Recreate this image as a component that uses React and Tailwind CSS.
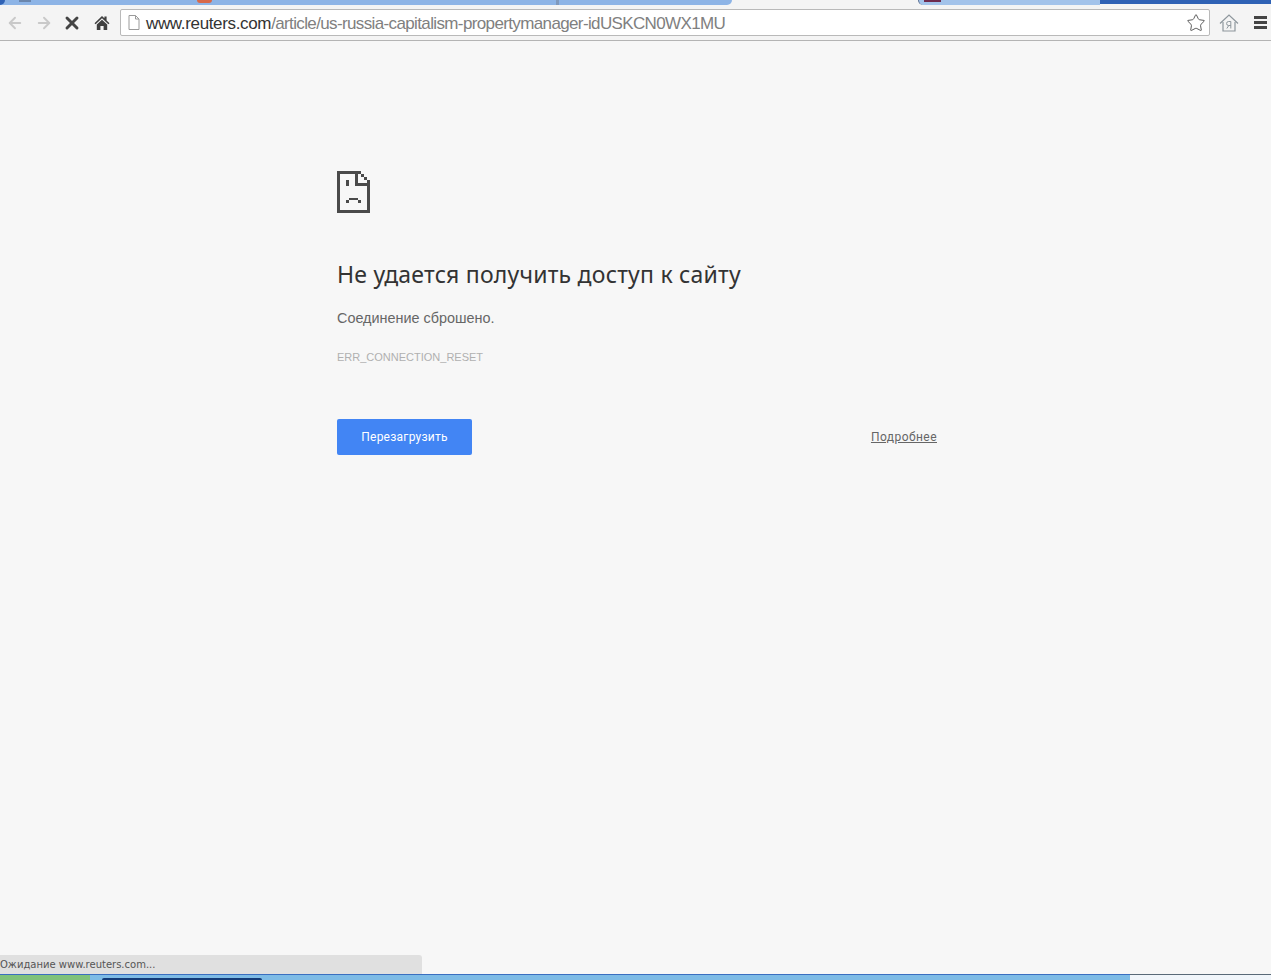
import { ArrowLeft, ArrowRight, X, Star } from "lucide-react";

function SadPage() {
  return (
    <svg width="33" height="42" viewBox="0 0 33 42" className="block" fill="#4a4a4a" shapeRendering="crispEdges">
      {/* outline */}
      <rect x="0" y="0" width="3" height="42" />
      <rect x="0" y="39" width="33" height="3" />
      <rect x="30" y="9" width="3" height="33" />
      <rect x="0" y="0" width="21" height="3" />
      {/* folded corner */}
      <rect x="21" y="0" width="3" height="3" />
      <rect x="24" y="3" width="3" height="3" />
      <rect x="27" y="6" width="3" height="3" />
      <rect x="18" y="0" width="3" height="15" />
      <rect x="18" y="12" width="15" height="3" />
      {/* face */}
      <rect x="9" y="9" width="3" height="6" />
      <rect x="12" y="27" width="9" height="2" />
      <rect x="9" y="29" width="3" height="3" />
      <rect x="21" y="29" width="3" height="3" />
    </svg>
  );
}

function HomeIcon() {
  return (
    <svg width="16" height="16" viewBox="0 0 16 16" fill="#3f3f3f">
      <path d="M8 1 0.5 8.2 1.6 9.2 8 3.2l6.4 6 1.1-1L12.6 5.4V1.6h-2.2v1.7z" />
      <path d="M2.8 9.6 8 4.8l5.2 4.8V15H9.6v-4H6.4v4H2.8z" />
    </svg>
  );
}

function YaHomeIcon() {
  return (
    <svg width="20" height="20" viewBox="0 0 20 20" fill="none" stroke="#8d969c" strokeWidth="1.2">
      <path d="M1 10.5 10 2l9 8.5" />
      <path d="M4 9v9h12V9" />
      <path d="M11.8 15.5v-7H9.6a2 2 0 0 0 0 4h2.2M9.8 12.5 7.8 15.5" strokeWidth="1" />
    </svg>
  );
}

function TabStrip() {
  return (
    <div className="flex h-[5px] bg-[#f4f4f4] overflow-hidden">
      <div className="w-[732px] bg-[#8db4e6] rounded-br-md flex">
        <div className="w-[5px] bg-[#2f62b5] rounded-br-md" />
        <div className="w-[12px] ml-[14px] h-[2px] bg-[#6a86ad]" />
        <div className="w-[15px] h-[3px] ml-[166px] bg-[#d8694a] rounded-b-md" />
        <div className="w-[3px] ml-[344px] bg-[#7f99bd]" />
      </div>
      <div className="w-[186px]" />
      <div className="w-[182px] bg-[#a3c3ea] rounded-bl-md flex border-l border-[#5c6f8f]">
        <div className="w-[17px] h-[2px] ml-[5px] bg-[#6e2b4e]" />
      </div>
      <div className="flex-1 h-[4px] bg-[#2f62b5]" />
    </div>
  );
}

function Toolbar() {
  return (
    <div className="flex items-center h-[36px] bg-[#f4f4f4] border-b border-[#b4b4b4]">
      <div className="flex items-center w-[120px] shrink-0">
        <ArrowLeft size={18} strokeWidth={2.5} className="text-[#c9c9c9] ml-[6px]" />
        <ArrowRight size={18} strokeWidth={2.5} className="text-[#c9c9c9] ml-[11px]" />
        <X size={20} strokeWidth={3.5} className="text-[#444444] ml-[9px]" />
        <div className="ml-[12px]"><HomeIcon /></div>
      </div>
      <div className="flex items-center flex-1 h-[27px] bg-white border border-[#b9b9b9] rounded-[2px]">
        <svg width="12" height="15" viewBox="0 0 12 15" fill="none" stroke="#9a9a9a" className="ml-[7px] shrink-0">
          <path d="M1 .5h6.5l3.5 3.5v10.5H1zM7.5 .5V4H11" />
        </svg>
        <div className="ml-[6px] pt-[2px] text-[17px] leading-none font-['Liberation_Sans',sans-serif] whitespace-nowrap">
          <span className="text-[#333333] tracking-[-0.35px]">www.reuters.com</span>
          <span className="text-[#808080] tracking-[-0.63px]">/article/us-russia-capitalism-propertymanager-idUSKCN0WX1MU</span>
        </div>
        <Star size={20} strokeWidth={1.2} className="text-[#5c5c5c] ml-auto mr-[3px]" />
      </div>
      <div className="flex items-center w-[61px] shrink-0">
        <div className="ml-[9px]"><YaHomeIcon /></div>
        <div className="ml-[15px] flex flex-col gap-[2px]">
          <div className="w-[13px] h-[3px] bg-[#444444]" />
          <div className="w-[13px] h-[3px] bg-[#444444]" />
          <div className="w-[13px] h-[3px] bg-[#444444]" />
        </div>
      </div>
    </div>
  );
}

function ErrorContent() {
  return (
    <div className="ml-[337px] w-[600px] pt-[130px]">
      <SadPage />
      <h1 className="mt-[43px] text-[23px] leading-[36px] text-[#333333] font-normal font-['Noto_Sans',sans-serif] tracking-[0.22px]">
        Не удается получить доступ к сайту
      </h1>
      <p className="mt-[15px] text-[14.4px] leading-[22px] text-[#666666] font-['Liberation_Sans',sans-serif]">Соединение сброшено.</p>
      <p className="mt-[19px] text-[11px] leading-[18px] text-[#b0b0b0] font-['Liberation_Sans',sans-serif]">ERR_CONNECTION_RESET</p>
      <div className="flex items-center justify-between mt-[53px]">
        <button className="w-[135px] h-[36px] bg-[#4285f4] rounded-[2px] text-white text-[12px] tracking-[0.25px] font-['Roboto',sans-serif]">
          Перезагрузить
        </button>
        <a className="text-[12px] text-[#666666] underline tracking-[0.45px] font-['Roboto',sans-serif]">Подробнее</a>
      </div>
    </div>
  );
}

function BottomBars() {
  return (
    <div className="flex flex-col">
      <div className="w-[422px] h-[19px] bg-[#e0e0e0] rounded-tr-[3px] text-[10px] leading-[20px] text-[#555555] font-['DejaVu_Sans',sans-serif]">
        Ожидание www.reuters.com...
      </div>
      <div className="flex h-[6px] bg-[#7dbbe6] border-t border-[#3a6fc0]">
        <div className="w-[90px] bg-[#7fc27a]" />
        <div className="w-[160px] ml-[12px] mt-[3px] rounded-t-[2px] bg-[#123a78]" />
        <div className="flex-1" />
        <div className="w-[141px] bg-[#f1f6fb] -mt-px border-t border-[#5a6a78]" />
      </div>
    </div>
  );
}

export default function App() {
  return (
    <div className="w-[1271px] h-[980px] flex flex-col bg-[#f7f7f7] overflow-hidden">
      <TabStrip />
      <Toolbar />
      <main className="flex-1">
        <ErrorContent />
      </main>
      <BottomBars />
    </div>
  );
}
